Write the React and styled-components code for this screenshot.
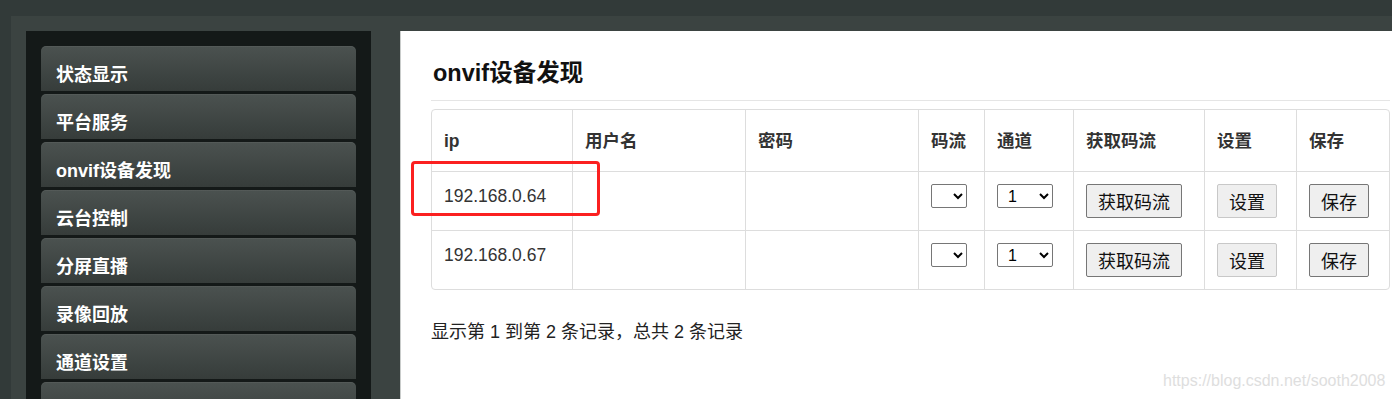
import React from "react";
import styled, { createGlobalStyle } from "styled-components";

const GlobalStyle = createGlobalStyle`
  html, body {
    margin: 0;
    padding: 0;
    background: #323a39;
    overflow: hidden;
  }
  body {
    font-family: "Liberation Sans", "Noto Sans CJK SC", Arial, sans-serif;
  }
`;

const Page = styled.div`
  width: 1450px;
  height: 399px;
  padding: 16px 0 0 11px;
  box-sizing: border-box;
`;

const Shell = styled.div`
  display: flex;
  gap: 29px;
  align-items: stretch;
  height: 100%;
  padding: 15px 0 0 15px;
  box-sizing: border-box;
  background: #3b4341;
`;

const Sidebar = styled.nav`
  width: 345px;
  flex: none;
  padding: 15px 15px 0;
  box-sizing: border-box;
  background: #141918;
  display: flex;
  flex-direction: column;
  gap: 3px;
  overflow: hidden;
`;

const MenuItem = styled.div`
  height: 45px;
  flex: none;
  box-sizing: border-box;
  padding: 8px 15px 0;
  display: flex;
  align-items: center;
  border-radius: 5px 5px 0 0;
  background: linear-gradient(#4b5250, #363c3a);
  box-shadow: inset 0 1px 0 rgba(255, 255, 255, 0.05);
  color: #fff;
  font-family: "Liberation Sans", "Noto Sans CJK SC", sans-serif;
  font-weight: bold;
  font-size: 18px;
`;

const Content = styled.main`
  position: relative;
  width: 1020px;
  flex: none;
  box-sizing: border-box;
  background: #fff;
  border-left: 1px solid #c9cccb;
  padding: 30px 30px 0;
  color: #333;
`;

const Heading = styled.h4`
  margin: 0;
  padding: 0 0 14px 2px;
  border-bottom: 1px solid #e5e5e5;
  font-size: 23.5px;
  line-height: 25px;
  font-weight: bold;
  color: #111;
`;

const Table = styled.table`
  margin-top: 8px;
  width: 959px;
  table-layout: fixed;
  border-collapse: separate;
  border-spacing: 0;
  border: 1px solid #dddddd;
  border-radius: 4px;
  font-size: 17.5px;
`;

const Th = styled.th`
  box-sizing: border-box;
  width: ${(p) => p.$w}px;
  padding: 19px 12px 18px;
  line-height: 24px;
  text-align: left;
  vertical-align: middle;
  font-weight: bold;
  color: #333;
  border-left: 1px solid #dddddd;
  &:first-child {
    border-left: none;
  }
`;

const Td = styled.td`
  box-sizing: border-box;
  padding: 12px 12px;
  line-height: 24px;
  vertical-align: top;
  border-top: 1px solid #dddddd;
  border-left: 1px solid #dddddd;
  &:first-child {
    border-left: none;
  }
`;

const Select = styled.select`
  display: block;
  width: ${(p) => p.$w}px;
  height: 24px;
  margin: 0;
  padding: 0 0 0 6px;
  font-family: "Liberation Sans", sans-serif;
  font-size: 16px;
  color: #000;
  background: #fff;
  border: 1px solid #767676;
  border-radius: 2px;
`;

const Button = styled.button`
  display: block;
  width: ${(p) => p.$w}px;
  height: 34px;
  margin: 0;
  padding: 0;
  font-family: "Liberation Sans", "Noto Sans CJK SC", sans-serif;
  font-size: 18px;
  color: #111;
  background: #efefef;
  border: 1px solid ${(p) => (p.$soft ? "#c8c8c8" : "#767676")};
  border-radius: 2px;
`;

const Summary = styled.div`
  margin-top: 30px;
  font-size: 18px;
  line-height: 24px;
  color: #222;
`;

const Mark = styled.div`
  position: absolute;
  left: 10px;
  top: 130px;
  width: 189px;
  height: 55px;
  box-sizing: border-box;
  border: 3px solid #fb2020;
  border-radius: 4px;
  pointer-events: none;
`;

const Watermark = styled.div`
  position: absolute;
  left: 762px;
  top: 341px;
  font-family: "Liberation Sans", sans-serif;
  font-size: 16px;
  line-height: 18px;
  color: #dedede;
  white-space: nowrap;
`;

const menu = ["状态显示", "平台服务", "onvif设备发现", "云台控制", "分屏直播", "录像回放", "通道设置", ""];

const columns = [
  ["ip", 140],
  ["用户名", 173],
  ["密码", 173],
  ["码流", 66],
  ["通道", 89],
  ["获取码流", 131],
  ["设置", 92],
  ["保存", 93],
];

const devices = ["192.168.0.64", "192.168.0.67"];

const App = () => {
  return (
    <>
      <GlobalStyle />
      <Page>
        <Shell>
          <Sidebar>
            {menu.map((m, i) => (
              <MenuItem key={i}>{m}</MenuItem>
            ))}
          </Sidebar>
          <Content>
            <Heading>onvif设备发现</Heading>
            <Table>
              <thead>
                <tr>
                  {columns.map(([label, w]) => (
                    <Th key={label} $w={w}>
                      {label}
                    </Th>
                  ))}
                </tr>
              </thead>
              <tbody>
                {devices.map((ip) => (
                  <tr key={ip}>
                    <Td>{ip}</Td>
                    <Td />
                    <Td />
                    <Td>
                      <Select $w={36} defaultValue="">
                        <option value=""></option>
                      </Select>
                    </Td>
                    <Td>
                      <Select $w={56} defaultValue="1">
                        <option value="1">1</option>
                        <option value="2">2</option>
                      </Select>
                    </Td>
                    <Td>
                      <Button $w={96}>获取码流</Button>
                    </Td>
                    <Td>
                      <Button $w={60} $soft>
                        设置
                      </Button>
                    </Td>
                    <Td>
                      <Button $w={60}>保存</Button>
                    </Td>
                  </tr>
                ))}
              </tbody>
            </Table>
            <Summary>显示第 1 到第 2 条记录，总共 2 条记录</Summary>
            <Mark />
            <Watermark>https://blog.csdn.net/sooth2008</Watermark>
          </Content>
        </Shell>
      </Page>
    </>
  );
};

export default App;
